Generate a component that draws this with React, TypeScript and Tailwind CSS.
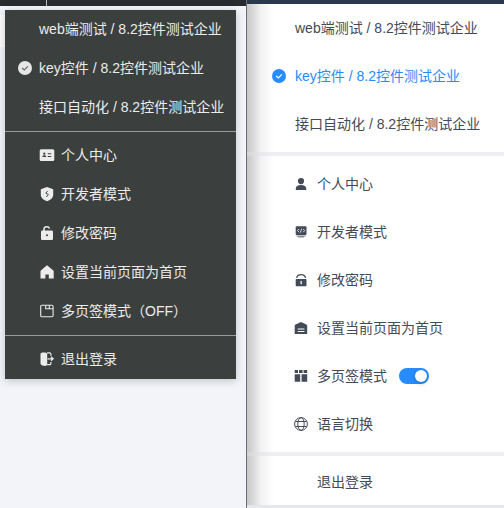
import type { ReactNode } from 'react';

const companies = ['web端测试 / 8.2控件测试企业', 'key控件 / 8.2控件测试企业', '接口自动化 / 8.2控件测试企业'];

function CheckCircle({ fill, stroke }: { fill: string; stroke: string }) {
  return (
    <svg width="14" height="14" viewBox="0 0 14 14">
      <circle cx="7" cy="7" r="7" fill={fill} />
      <path d="M4.2 7l2.1 2 3.6-3.7" fill="none" stroke={stroke} strokeWidth="1.1" />
    </svg>
  );
}

function Icon({ children }: { children: ReactNode }) {
  return (
    <svg className="shrink-0" width="16" height="16" viewBox="0 0 16 16" fill="currentColor">
      {children}
    </svg>
  );
}

const darkItems: { label: string; icon: ReactNode }[] = [
  {
    label: '个人中心',
    icon: (
      <>
        <rect x="0.7" y="2.2" width="14.6" height="11.8" rx="1.5" />
        <g fill="#3b403f">
          <circle cx="5.3" cy="6.7" r="1.1" />
          <path d="M3.3 10c0-2.4 4-2.4 4 0zM8.8 6.2h3.4v1H8.8zM8.8 8.9h3.4v1H8.8z" />
        </g>
      </>
    ),
  },
  {
    label: '开发者模式',
    icon: (
      <>
        <path d="M8 1l6.2 2.2v5.2c0 3.4-2.6 5.4-6.2 6.8-3.6-1.4-6.2-3.4-6.2-6.8V3.2z" />
        <path d="M8.7 4.9L6.8 7.2l2.6 1.3-2.1 2.5" fill="none" stroke="#3b403f" strokeWidth="0.9" />
      </>
    ),
  },
  {
    label: '修改密码',
    icon: (
      <>
        <rect x="2" y="5.5" width="12" height="9.5" rx="1.2" />
        <path d="M5 6V4c0-2.8 4.8-3.2 5.5-.4" fill="none" stroke="currentColor" strokeWidth="1.5" />
        <circle cx="8" cy="10.2" r="1" fill="#3b403f" />
      </>
    ),
  },
  {
    label: '设置当前页面为首页',
    icon: <path d="M8 1.2l6.3 5.2c.3.3.4.5.4.9v7.3H9.8v-4H6.4v4H1.5V7.3c0-.4.1-.6.4-.9z" />,
  },
  {
    label: '多页签模式（OFF）',
    icon: (
      <g fill="none" stroke="currentColor" strokeWidth="1.1">
        <rect x="1.7" y="2.3" width="12.4" height="11.4" rx="1.2" />
        <path d="M6.7 2.5v3.2h7.2M10.3 2.5v3.2" />
      </g>
    ),
  },
];

const lightItems: { label: string; icon: ReactNode }[] = [
  {
    label: '个人中心',
    icon: (
      <>
        <circle cx="8" cy="5.1" r="3.1" />
        <path d="M2.8 14v-1.5c0-2.4 2-3.6 5.2-3.6s5.2 1.2 5.2 3.6V14z" />
      </>
    ),
  },
  {
    label: '开发者模式',
    icon: (
      <>
        <rect x="2.7" y="2.2" width="10.8" height="8.9" rx="1" />
        <path d="M3.3 11.5h9.6v.8l-2 .5v.8H5.3v-.8l-2-.5z" opacity="0.65" />
        <path d="M6 5L4.5 6.6 6 8.2M10.2 5l1.5 1.6-1.5 1.6M8.7 4.6l-1.3 4" fill="none" stroke="#fff" strokeWidth="0.8" />
      </>
    ),
  },
  {
    label: '修改密码',
    icon: (
      <>
        <rect x="2.7" y="7" width="10.8" height="7.2" rx="0.7" />
        <path d="M3.7 5.9c.4-4.4 8.3-4.4 8.8 0" fill="none" stroke="currentColor" strokeWidth="1.3" />
        <path d="M7.5 9h1.3v3.2H7.5z" fill="#fff" />
      </>
    ),
  },
  {
    label: '设置当前页面为首页',
    icon: (
      <>
        <path d="M8 1.9l5.3 2.7c.6.3.9.8.9 1.5v7.8H1.7V6.1c0-.7.3-1.2.9-1.5z" />
        <path d="M4.7 8.5h6.7v1H4.7zM4.7 11h6.7v1H4.7z" fill="#fff" />
      </>
    ),
  },
  {
    label: '多页签模式',
    icon: <path d="M1.7 2H5v2.9H1.7zM6 2h3.6v2.9H6zM10.6 2h3.6v2.9h-3.6zM1.7 6.3h5.5v7.5H1.7zM8.6 6.3h5.6v7.5H8.6z" />,
  },
  {
    label: '语言切换',
    icon: (
      <g fill="none" stroke="currentColor" strokeWidth="1">
        <circle cx="8" cy="8" r="6.4" />
        <ellipse cx="8" cy="8" rx="3.2" ry="6.4" />
        <path d="M2.3 5.5h11.4M2.3 10.5h11.4" />
      </g>
    ),
  },
];

function DarkMenu() {
  return (
    <div className="mt-1 h-[369px] w-[231px] bg-[#3b403f] text-[#ececec] shadow-[0_2px_8px_rgba(0,0,0,0.2)]">
      {companies.map((name, i) => (
        <div key={name} className="flex h-[39px] items-center pb-[2px] pl-[13px]">
          <span className="w-[21px] shrink-0">{i === 1 && <CheckCircle fill="#e6e6e6" stroke="#666" />}</span>
          <span className="whitespace-nowrap">{name}</span>
        </div>
      ))}
      <div className="my-1 h-px bg-[#979a99]" />
      {darkItems.map(({ label, icon }) => (
        <div key={label} className="flex h-[39px] items-center gap-[6px] pb-[2px] pl-[34px]">
          <Icon>{icon}</Icon>
          <span className="whitespace-nowrap">{label}</span>
        </div>
      ))}
      <div className="my-1 h-px bg-[#979a99]" />
      <div className="flex h-[39px] items-center gap-[6px] pb-[2px] pl-[34px]">
        <Icon>
          <path d="M1.5 2.5L3 1.4h3.2c1.3.3 2 1 2 2.1v9c0 1.2-.6 2.2-2 2.6-2.5-.2-4.7-1-4.7-2.5z" />
          <path d="M8 1.9h2.5c1 0 1.4.5 1.4 1.3v1.5M8 13.7h2.5c1 0 1.4-.5 1.4-1.3v-1.3M8.5 7.8h5.3M12 5.8l2.2 2-2.2 2" fill="none" stroke="currentColor" strokeWidth="1.2" />
        </Icon>
        <span>退出登录</span>
      </div>
    </div>
  );
}

function LightMenu() {
  return (
    <div className="bg-linear-to-r from-[#c6c6c6] via-[#f2f2f2] via-[14px] to-white to-[27px] text-[#434a58]">
      {companies.map((name, i) => (
        <div key={name} className={`flex h-12 items-center pl-[25px] ${i === 1 ? 'text-[#268cff]' : ''}`}>
          <span className="w-[23px] shrink-0">{i === 1 && <CheckCircle fill="#268cff" stroke="#fff" />}</span>
          <span className="whitespace-nowrap">{name}</span>
        </div>
      ))}
      <div className="my-1 h-1 bg-[#dfe0e7]/50" />
      {lightItems.map(({ label, icon }) => (
        <div key={label} className="flex h-12 items-center gap-2 pl-[46px]">
          <Icon>{icon}</Icon>
          <span className="whitespace-nowrap">{label}</span>
          {label === '多页签模式' && (
            <span className="ml-1 flex h-4 w-[30px] items-center justify-end rounded-full bg-[#268cff] pr-0.5">
              <span className="size-3 rounded-full bg-white shadow-[0_2px_4px_rgba(0,35,11,0.2)]" />
            </span>
          )}
        </div>
      ))}
      <div className="mt-1 h-1 bg-[#dfe0e7]/50" />
      <div className="flex h-[49px] items-center pl-[70px] pt-[3px]">退出登录</div>
    </div>
  );
}

export default function App() {
  return (
    <main className="flex h-[508px] w-[504px] overflow-hidden font-['Liberation_Sans','Noto_Sans_CJK_SC',sans-serif] text-[14px] leading-[22px]">
      <section className="w-[246px] shrink-0 bg-[#f3f4fa]">
        <div className="flex h-[6px] bg-[#272b2f]">
          <div className="ml-[46px] w-px bg-[#b7b9ba]" />
        </div>
        <div className="flex">
          <div className="w-[5px] shrink-0 pt-[9px]">
            <div className="h-8 bg-[#fcfcfd]" />
          </div>
          <DarkMenu />
        </div>
      </section>
      <div className="w-px shrink-0 bg-[#707070]" />
      <section className="min-w-0 grow bg-[#e5e7ea]">
        <div className="h-1 bg-[#2c3850]" />
        <LightMenu />
      </section>
    </main>
  );
}
